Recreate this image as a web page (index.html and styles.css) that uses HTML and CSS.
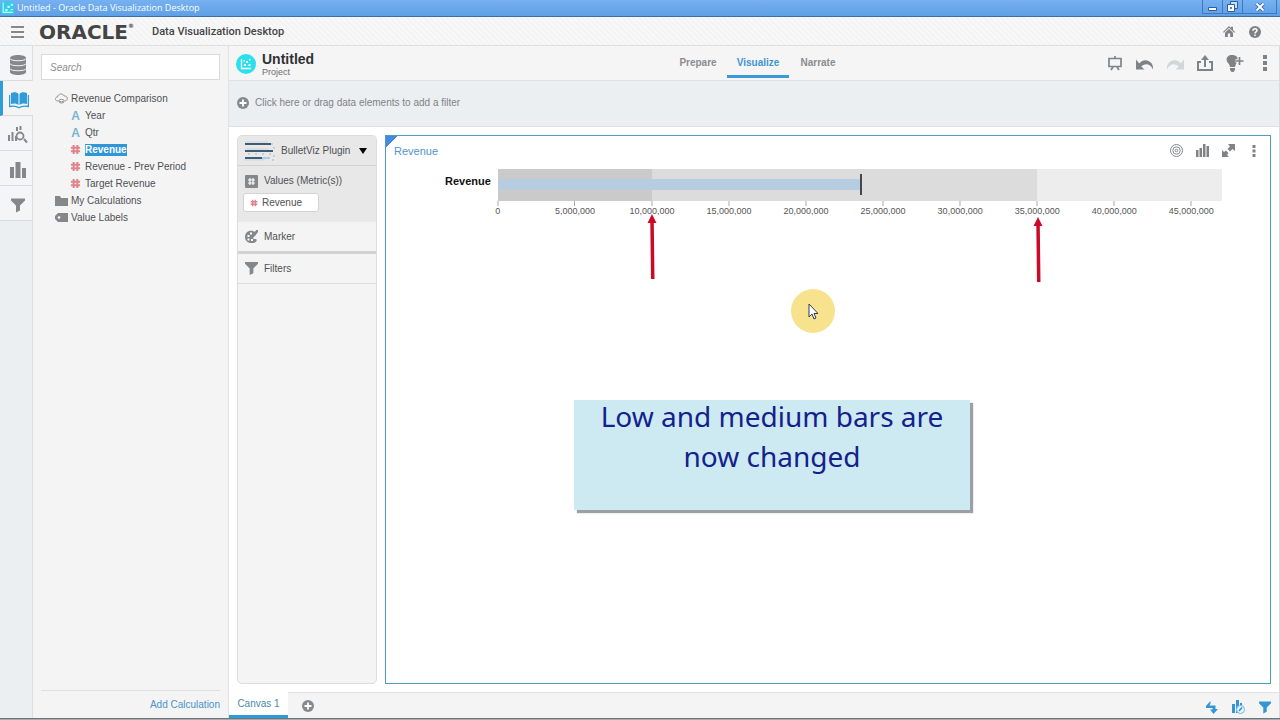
FILE: index.html
```html
<!DOCTYPE html>
<html lang="en">
<head>
<meta charset="utf-8">
<title>Untitled - Oracle Data Visualization Desktop</title>
<link rel="stylesheet" href="styles.css">
</head>
<body>
<svg class="defs" aria-hidden="true">
  <symbol id="hash" viewBox="0 0 12 12"><path d="M4 1v10M8 1v10M1 4h10M1 8h10" fill="none" stroke="currentColor" stroke-width="2.2"/></symbol>
  <symbol id="funnel" viewBox="0 0 14 14"><path d="M0 0h14v2L9 7v5l-4 2V7L0 2z" fill="currentColor"/></symbol>
  <symbol id="plus" viewBox="0 0 12 12"><circle cx="6" cy="6" r="6" fill="#868a8c"/><path d="M6 2.5v7M2.5 6h7" stroke="#fff" stroke-width="1.8"/></symbol>
  <symbol id="undo" viewBox="0 0 18 12"><path d="M0 1v10h8.500L5.300 8C8 5 14 4 17 11c.6-5-2-8-6-9C8 1.300 5.500 2.500 3.300 5z" fill="currentColor"/></symbol>
  <symbol id="dots" viewBox="0 0 4 16"><path d="M0 0h4v4H0zM0 6h4v4H0zM0 12h4v4H0z" fill="currentColor"/></symbol>
  <symbol id="arrow" viewBox="0 0 10 66"><path d="M5 0l4.500 9H6.800L7.500 65H4L3.300 9H.5z" fill="#cb0a28"/></symbol>
</svg>
<div class="app">
  <div class="titlebar">
    <svg class="appicon" viewBox="0 0 12 12"><path d="M0 0h14v12H0z" fill="#35cbe8"/><path d="M2 1v9h9" fill="none" stroke="#bff" stroke-width="1"/><path d="M4 7h2v2H4zM6 4h2v2H6zM9 2h2v2H9zM9 7h2v1H9z" fill="#cff"/></svg>
    <span class="wintitle">Untitled - Oracle Data Visualization Desktop</span>
    <div class="winbtns">
      <button aria-label="Minimize"><svg width="10" height="10"><path d="M.5 5.500h8v3h-8z" fill="#fff" stroke="#2d5f9e"/></svg></button>
      <button aria-label="Restore"><svg width="11" height="11"><path d="M3.500.5h7v7h-7z" fill="#c6e0fa" stroke="#2d5f9e"/><path d="M.5 3.500h7v7h-7z" fill="#fff" stroke="#2d5f9e"/><path d="M3 6h2v2H3z" fill="#4a85c8"/></svg></button>
      <button class="close" aria-label="Close"><svg width="10" height="10"><path d="M1.500 1.500l7 7M8.500 1.500l-7 7" stroke="#2d5f9e" stroke-width="3.500"/><path d="M1.500 1.500l7 7M8.500 1.500l-7 7" stroke="#fff" stroke-width="2"/></svg></button>
    </div>
  </div>

  <header class="brand">
    <button class="ic menu" aria-label="Menu"><svg width="13" height="12"><path d="M0 1h13M0 6h13M0 11h13" stroke="#858789" stroke-width="2"/></svg></button>
    <span class="oracle">ORACLE<small>®</small></span>
    <span class="product">Data Visualization Desktop</span>
    <button class="ic home" aria-label="Home"><svg width="12" height="11"><path d="M6 0L8 2V.8h2V4l2 2-.8.8L6 1.800.8 6.800 0 6zM6 2.800l4 4V11H7.200V7.500H4.800V11H2V6.800z" fill="#808386"/></svg></button>
    <button class="ic" aria-label="Help"><svg width="12" height="12"><circle cx="6" cy="6" r="6" fill="#7e8184"/><path d="M4 4.700c0-2.800 4-2.600 4-.3 0 1.400-2 1.400-2 3M6 8.500v1.500" fill="none" stroke="#fff" stroke-width="1.500"/></svg></button>
  </header>

  <div class="body">
    <nav class="rail">
      <button aria-label="Data sources"><svg width="16" height="20"><path d="M0 3c0-4 16-4 16 0v14c0 4-16 4-16 0z" fill="#85888a"/><path d="M0 3.500c0 3 16 3 16 0M0 8.500c0 3 16 3 16 0M0 13.500c0 3 16 3 16 0" fill="none" stroke="#f4f5f6"/></svg></button>
      <button class="on" aria-label="Data elements"><svg width="20" height="17"><path d="M2 1c3-1 6-1 7.500 1v11C8 11.500 5 11 2 12zM18 1c-3-1-6-1-7.500 1v11c1.500-1.500 4.500-2 7.500-1z" fill="#2f9bd8"/><path d="M.6 3v11.500c4-.8 7-.5 9.400 1.300 2.400-1.800 5.400-2.100 9.400-1.300V3" fill="none" stroke="#2f9bd8" stroke-width="1.300"/></svg></button>
      <button aria-label="Analytics"><svg width="20" height="18"><path d="M1 9v6M4.500 6v9M8 10v5" stroke="#85888a" stroke-width="2"/><circle cx="12" cy="10" r="3.500" fill="none" stroke="#85888a" stroke-width="1.800"/><path d="M9 1v4M12.500 0v4M16 13l3 3.500" stroke="#85888a" stroke-width="2"/></svg></button>
      <button aria-label="Visualizations"><svg width="16" height="17"><path d="M0 5h4v11H0zM5.500 0h5v16h-5zM12 6h4v10h-4z" fill="#85888a"/></svg></button>
      <button aria-label="Filters"><svg class="big"><use href="#funnel"/></svg></button>
    </nav>

    <aside class="data">
      <input class="search" type="text" placeholder="Search" aria-label="Search">
      <ul class="tree">
        <li><svg width="13" height="11"><path d="M3 8C-.5 8-.5 4 2.500 4 3 .5 8 0 9.200 3c3.500-.5 4.500 4.500 1 5M4 7.500a2.500 1.200 0 0 1 5 0v1a2.500 1.500 0 0 1-5 0zM4 7.500a2.500 1.200 0 0 0 5 0" fill="none" stroke="#909294"/></svg>Revenue Comparison</li>
        <li class="sub"><b class="attr">A</b>Year</li>
        <li class="sub"><b class="attr">A</b>Qtr</li>
        <li class="sub"><svg class="hash"><use href="#hash"/></svg><mark>Revenue</mark></li>
        <li class="sub"><svg class="hash"><use href="#hash"/></svg>Revenue - Prev Period</li>
        <li class="sub"><svg class="hash"><use href="#hash"/></svg>Target Revenue</li>
        <li><svg width="13" height="10"><path d="M0 0h5l1 2h7v8H0z" fill="#858789"/></svg>My Calculations</li>
        <li><svg width="13" height="9"><path d="M3 0h10v9H3L0 6V3z" fill="#858789"/><circle cx="4" cy="4.500" r="1.300" fill="#fff"/></svg>Value Labels</li>
      </ul>
      <div class="addcalc"><a href="#">Add Calculation</a></div>
    </aside>

    <main>
      <div class="project">
        <div class="ident">
          <svg class="projicon" viewBox="0 0 20 20"><circle cx="10" cy="10" r="10" fill="#2be0ee"/><path d="M5.500 5v9.500H15" fill="none" stroke="#fff" stroke-width="1.300"/><path d="M8 10h2v2H8zM10 7h2v2h-2zM12.500 10h2v2h-2zM13 5h1.500v1.500H13zM7.500 6H9v1.500H7.500z" fill="#fff"/></svg>
          <div class="name"><h1>Untitled</h1><span>Project</span></div>
        </div>
        <div class="modes">
          <button>Prepare</button><button class="on">Visualize</button><button>Narrate</button>
        </div>
        <div class="tools">
          <button class="ic" aria-label="Present"><svg width="14" height="15"><path d="M1 2.500h12v8H1zM7 0v2M5 11l-2 3M9 11l2 3" fill="none" stroke="#808386" stroke-width="1.700"/></svg></button>
          <button class="ic" aria-label="Undo"><svg class="undo"><use href="#undo"/></svg></button>
          <button class="ic" aria-label="Redo" disabled><svg class="undo redo"><use href="#undo"/></svg></button>
          <button class="ic" aria-label="Share"><svg width="16" height="16"><path d="M4 7H1v8h14V7h-3M8 12V4" fill="none" stroke="#808386" stroke-width="2"/><path d="M8 0l4 5H4z" fill="#808386"/></svg></button>
          <button class="ic" aria-label="Insights"><svg width="18" height="17"><path d="M6 0c7 0 7 6 4 9l-1 3H4L3 9C-1 6 0 0 6 0zM4 13h5v2L7.500 17h-2L4 15z" fill="#808386"/><path d="M13.500 2v8M9.500 6h8" stroke="#f5f5f6" stroke-width="3.500"/><path d="M13.500 2v8M9.500 6h8" stroke="#808386" stroke-width="1.700"/></svg></button>
          <button class="ic" aria-label="More"><svg class="dots"><use href="#dots"/></svg></button>
        </div>
      </div>

      <button class="filterbar"><svg class="plus"><use href="#plus"/></svg>Click here or drag data elements to add a filter</button>

      <div class="work">
        <section class="grammar">
          <button class="viztype">
            <svg width="32" height="20"><path d="M1 3h26M1 10h28M1 17h17" stroke="#3e5d74" stroke-width="2"/><path d="M1 1h23M1 8h24M1 19h20" stroke="#c9d5e0"/><path d="M18 17h8" stroke="#a9cbe6" stroke-width="2"/><path d="M28 2v2M30 6v2M4 13h2M11 13h2M18 13h2M25 13h2M30 14v2M28 19h2" stroke="#a6b4c2"/></svg>
            <span>BulletViz Plugin</span>
            <svg width="8" height="6"><path d="M0 0h8L4 6z" fill="#000"/></svg>
          </button>
          <div class="values">
            <div class="row"><svg width="13" height="13"><rect width="13" height="13" rx="1" fill="#858789"/><path d="M5 3v7M8 3v7M3 5h7M3 8h7" stroke="#fff" stroke-width="1.200"/></svg>Values (Metric(s))</div>
            <button class="pill"><svg class="hash"><use href="#hash"/></svg>Revenue</button>
          </div>
          <div class="row marker"><svg width="13" height="13"><path d="M8 1C3 0 0 3 0 7s3 6 7 6c5 0 6-4 3-4S8 7 10 6L12 3z" fill="#858789"/><path d="M13 0L7 7" stroke="#858789" stroke-width="2.500"/><path d="M2.500 5h2v2h-2zM5 2.500h2v2H5zM2.500 8.500h2v2h-2zM6 9h2v2H6z" fill="#fff"/></svg>Marker</div>
          <div class="row filters"><svg width="13" height="13"><use href="#funnel"/></svg>Filters</div>
        </section>

        <section class="viz">
          <div class="vizhead">
            <h2>Revenue</h2>
            <div class="viztools">
              <button class="ic" aria-label="Target"><svg width="13" height="13"><g fill="none" stroke="#858789"><circle cx="6.500" cy="6.500" r="6"/><circle cx="6.500" cy="6.500" r="3.700"/><circle cx="6.500" cy="6.500" r="1.300"/></g></svg></button>
              <button class="ic" aria-label="Chart type"><svg width="13" height="13"><path d="M0 6h2.500v7H0zM3.500 4H6v9H3.500zM7 0h2.500v13H7zM10.500 2H13v11h-2.500z" fill="#808386"/></svg></button>
              <button class="ic" aria-label="Maximize"><svg width="13" height="13"><path d="M6 0h7v7l-2.500-2L8 7.500 5.500 5 8 2.500zM0 6l2 2 2-1.500L6.500 9 5 11l2 2H0z" fill="#808386"/></svg></button>
              <button class="ic" aria-label="More"><svg class="dots small"><use href="#dots"/></svg></button>
            </div>
          </div>
          <div class="chart">
            <strong>Revenue</strong>
            <div class="plot">
              <div class="bands">
                <div class="high"></div>
                <div class="mid" style="width:74.5%"></div>
                <div class="low" style="width:21.3%"></div>
                <div class="measure" style="width:50%"></div>
                <div class="target" style="left:50%"></div>
              </div>
              <span class="tick" style="left:0%">0</span>
              <span class="tick" style="left:10.64%">5,000,000</span>
              <span class="tick" style="left:21.28%">10,000,000</span>
              <span class="tick" style="left:31.92%">15,000,000</span>
              <span class="tick" style="left:42.56%">20,000,000</span>
              <span class="tick" style="left:53.2%">25,000,000</span>
              <span class="tick" style="left:63.84%">30,000,000</span>
              <span class="tick" style="left:74.48%">35,000,000</span>
              <span class="tick" style="left:85.12%">40,000,000</span>
              <span class="tick" style="left:95.76%">45,000,000</span>
              <svg class="arrow first"><use href="#arrow"/></svg>
              <svg class="arrow second"><use href="#arrow"/></svg>
            </div>
          </div>
          <div class="pointer"><svg width="10" height="17"><path d="M1 1v13l3-3 2 5 2-1-2-4.500h4z" fill="#fff" stroke="#333a55"/></svg></div>
          <div class="callout"><p>Low and medium bars are<br>now changed</p></div>
        </section>
      </div>

      <div class="canvasbar">
        <button class="canvas">Canvas 1</button>
        <button class="ic" aria-label="Add canvas"><svg class="plus"><use href="#plus"/></svg></button>
        <div class="status">
          <button class="ic" aria-label="Refresh"><svg width="12" height="13"><path d="M4.500 0v2.500L3.500 4.500H9.500V8H12L7.500 13 4 8.500h2.500V7H0V5L4.500 0z" fill="#3296d4"/></svg></button>
          <button class="ic" aria-label="Brushing"><svg width="13" height="14"><path d="M0 4h3v9H0zM4 0h3v13H4zM8 3h2v4H8z" fill="#3296d4"/><circle cx="8.500" cy="9.500" r="4" fill="#eaf5fc" stroke="#6fb7e2"/><path d="M7 11l3-3.500" stroke="#3296d4" stroke-width="1.500"/></svg></button>
          <button class="ic blue" aria-label="Filters"><svg width="12" height="13"><use href="#funnel"/></svg></button>
        </div>
      </div>
    </main>
  </div>
  <div class="taskbar"></div>
</div>
</body>
</html>
```

FILE: styles.css
```css
* { box-sizing: border-box; }
body { margin: 0; font: 10px/12px "Liberation Sans", Arial, sans-serif; color: #4f5153; background: #f4f4f5; }
button { font: inherit; color: inherit; border: 0; background: none; padding: 0; margin: 0; }
svg { display: block; flex: none; }
h1, h2, p, ul { margin: 0; padding: 0; }
a { color: #4a93cb; text-decoration: none; }
.defs { position: absolute; width: 0; height: 0; }
.ic { display: flex; align-items: center; justify-content: center; color: #808386; }
.app { min-height: 100vh; display: flex; flex-direction: column; }

.titlebar { display: flex; align-items: center; height: 17px; background: linear-gradient(#76b1f1, #5e9fe6); border-bottom: 1px solid #3d6ea8; }
.appicon { width: 13px; height: 14px; margin: 0 3px 0 1px; }
.wintitle { flex: 1; color: #fff; font: 9px/14px "Open Sans", sans-serif; }
.winbtns { display: flex; align-self: flex-start; margin-right: 3px; border: 1px solid #3f78bb; border-top: 0; }
.winbtns button { width: 20px; height: 13px; display: flex; align-items: center; justify-content: center; border-right: 1px solid #3f78bb; }
.winbtns .close { width: 33px; border: 0; }

.brand { display: flex; align-items: center; height: 29px; padding: 1px 19px 0 0; border-bottom: 1px solid #dddfe0; background: repeating-linear-gradient(45deg, #f8f8f8 0 2px, #f4f4f4 2px 4px); }
.menu { width: 35px; }
.oracle { margin-left: 4px; color: #444; font: bold 20px/24px "DejaVu Sans", sans-serif; display: flex; }
.oracle small { font-size: 6px; line-height: 12px; }
.product { flex: 1; margin-left: 18px; color: #444648; font: 500 11px/16px Roboto, sans-serif; }
.home { margin-right: 14px; }

.body { flex: 1; display: flex; }
.rail { width: 33px; background: #ebeff2; border-right: 1px solid #dcdfe1; }
.rail button { display: flex; align-items: center; justify-content: center; width: 32px; height: 35px; padding: 4px 0 0 4px; color: #85888a; background: #f4f5f6; border-bottom: 1px solid #d9dcde; }
.rail .on { width: 33px; padding-left: 1px; border-left: 3px solid #2f9bd8; background: #f4f4f5; }
.rail .big { width: 14px; height: 15px; }

.data { width: 196px; display: flex; flex-direction: column; padding: 8px 8px 0; border-right: 1px solid #e0e2e3; }
.search { height: 26px; border: 1px solid #d8dadb; background: #fff; padding: 0 8px; font: italic 10px "Liberation Sans", Arial, sans-serif; color: #555; }
.search::placeholder { color: #8c8e90; }
.tree { flex: 1; list-style: none; padding: 10px 0 0 14px; }
.tree li { display: flex; align-items: center; gap: 3px; height: 17px; white-space: nowrap; }
.tree .sub { padding-left: 15px; gap: 4px; }
.hash { width: 11px; height: 11px; color: #e0838a; }
.attr { width: 11px; text-align: center; font-size: 12px; color: #7cb4cd; }
mark { background: #2f97d8; color: #fff; font-weight: bold; }
.addcalc { height: 28px; border-top: 1px solid #dddfe0; display: flex; align-items: center; justify-content: flex-end; }

main { flex: 1; min-width: 0; display: flex; flex-direction: column; background: #fff; border-right: 1px solid #d9dcde; }
.project { display: grid; grid-template-columns: 1fr auto 1fr; align-items: center; height: 35px; background: #f5f5f6; border-bottom: 1px solid #dfe1e3; padding: 0 5px 0 7px; }
.ident { display: flex; align-items: center; padding-top: 1px; }
.projicon { width: 20px; height: 20px; margin-right: 6px; }
.name { font-size: 9px; line-height: 10px; color: #6b6d6f; padding-top: 1px; }
h1 { font-size: 14px; line-height: 16px; color: #303234; }
.modes { display: flex; align-self: stretch; font-weight: bold; color: #8a8c8e; margin-left: 6px; }
.modes button { width: 58px; padding: 5px 0 0; border-bottom: 3px solid transparent; margin-bottom: 2px; }
.modes .on { width: 62px; color: #3f94d1; border-color: #3a9bd9; }
.tools { display: flex; align-items: center; justify-content: flex-end; gap: 12px; }
.tools .ic { width: 18px; }
.undo { width: 18px; height: 13px; margin-top: 3px; }
.redo { transform: scaleX(-1); color: #d3d5d6; }
.dots { width: 4px; height: 16px; }
.dots.small { width: 4px; height: 12px; }

.filterbar { display: flex; align-items: center; gap: 6px; height: 46px; padding: 0 8px 1px; background: #ebeff2; border-bottom: 1px solid #dde1e4; color: #7f8385; }
.plus { width: 12px; height: 12px; }

.work { flex: 1; display: flex; gap: 8px; padding: 8px; }
.grammar { width: 140px; border: 1px solid #dcdcdc; border-radius: 5px; background: #f4f4f4; overflow: hidden; }
.viztype { display: flex; align-items: center; width: 100%; height: 30px; padding: 0 9px 0 6px; background: #e8e8e8; border-bottom: 1px solid #d2d2d2; text-align: left; }
.viztype span { flex: 1; padding-left: 5px; }
.row { display: flex; align-items: center; gap: 6px; padding-left: 7px; height: 30px; }
.row svg { color: #858789; }
.values { height: 56px; background: #e8e8e8; }
.values .row { height: 28px; padding-top: 2px; }
.pill { display: flex; align-items: center; gap: 4px; width: 76px; height: 19px; margin-left: 5px; padding-left: 6px; background: #fff; border: 1px solid #d3d3d3; border-radius: 3px; }
.values .pill { margin-top: -1px; }
.pill .hash { width: 8px; height: 8px; }
.marker { height: 32px; border-bottom: 3px solid #d2d2d2; }
.filters { border-bottom: 1px solid #dcdcdc; }

.viz { position: relative; flex: 1; border: 1px solid #4d9fb8; background: linear-gradient(135deg, #4488e2 8px, #fff 8px); }
.vizhead { display: flex; align-items: center; justify-content: space-between; height: 29px; padding: 0 9px 0 8px; }
h2 { font-size: 11px; font-weight: normal; color: #5094ce; }
.viztools { display: flex; gap: 12px; }
.viztools .ic { width: 14px; }
.chart { display: flex; gap: 7px; padding: 4px 48px 0 59px; }
.chart strong { line-height: 24px; font-size: 11px; color: #111; }
.plot { flex: 1; position: relative; }
.bands { position: relative; height: 32px; }
.bands div { position: absolute; top: 0; bottom: 0; left: 0; }
.bands .high { right: 0; background: #ededed; }
.bands .mid { background: #dcdcdc; }
.bands .low { background: #cacaca; }
.bands .measure { top: 10px; bottom: 11px; background: #b5cce1; }
.bands .target { top: 5px; bottom: 6px; width: 2px; background: #44474c; }
.tick { position: absolute; top: 32px; transform: translateX(-50%); font-size: 9px; line-height: 11px; color: #555; }
.tick::before { content: ""; display: block; width: 1px; height: 5px; margin: 0 auto; background: #aaa; }
.arrow { position: absolute; width: 10px; height: 66px; margin-left: -5px; }
.first { left: 21.3%; top: 45px; }
.second { left: 74.6%; top: 48px; }
.pointer { position: absolute; left: 405px; top: 153px; width: 44px; height: 44px; border-radius: 50%; background: #f7e38e; display: flex; align-items: center; justify-content: center; }
.callout { position: absolute; left: 188px; top: 264px; width: 396px; height: 110px; background: #cdeaf3; box-shadow: 3px 3px 1px #9c9fa5; color: #14218c; text-align: center; font: 28px/40px "Noto Sans", sans-serif; }
.callout p { margin-top: -4px; }

.canvasbar { display: flex; height: 26px; background: #f4f4f5; border-top: 1px solid #dfe1e3; }
.canvas { width: 59px; margin-top: -1px; background: #fff; border-bottom: 3px solid #2f9bd8; color: #4a8aa8; }
.canvasbar .ic { padding-left: 14px; }
.status { flex: 1; display: flex; justify-content: flex-end; align-items: center; padding: 3px 8px 0 0; }
.status .blue { color: #3296d4; }
.taskbar { height: 2px; background: #a7abb0; border-top: 1px solid #6c747c; }
```
